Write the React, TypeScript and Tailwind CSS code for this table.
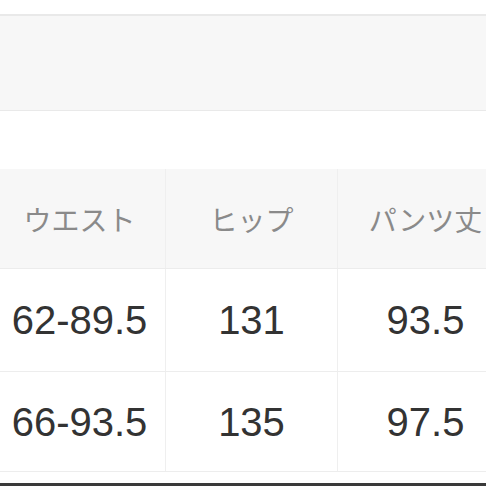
import React from 'react'

const HEADERS = ['ウエスト', 'ヒップ', 'パンツ丈']
const ROWS = [
  { h: 'h-[103px]', cells: ['62-89.5', '131', '93.5'] },
  { h: 'h-[100px]', cells: ['66-93.5', '135', '97.5'] },
]

export default function App() {
  return (
    <div className="w-[486px] h-[486px] overflow-hidden bg-white flex flex-col">
      <div className="h-[14px] shrink-0" />

      {/* top band */}
      <div className="h-[97px] shrink-0 bg-[#f7f7f7] border-t-2 border-b border-[#e9e9e9]" />

      <div className="h-[58px] shrink-0" />

      {/* size table */}
      <div className="ml-[-6px] w-[520px] shrink-0">
        <div className="grid grid-cols-[172px_172px_176px] h-[100px] bg-[#f7f7f7] border-b border-[#ececec]">
          {HEADERS.map((t) => (
            <div
              key={t}
              className="flex items-center justify-center border-r border-[#efefef] text-[28px] text-[#8a8a8a] font-['Noto_Sans_CJK_JP',sans-serif]"
            >
              {t}
            </div>
          ))}
        </div>
        {ROWS.map((row) => (
          <div key={row.cells[0]} className={`grid grid-cols-[172px_172px_176px] ${row.h} border-b border-[#ededed]`}>
            {row.cells.map((c, i) => (
              <div
                key={i}
                className="flex items-center justify-center border-r border-[#efefef] text-[40px] text-[#333] font-['Liberation_Sans',Arial,sans-serif]"
              >
                {c}
              </div>
            ))}
          </div>
        ))}
      </div>

      <div className="flex-1" />
      <div className="h-[3px] shrink-0 bg-[#3a3a3a]" />
    </div>
  )
}
